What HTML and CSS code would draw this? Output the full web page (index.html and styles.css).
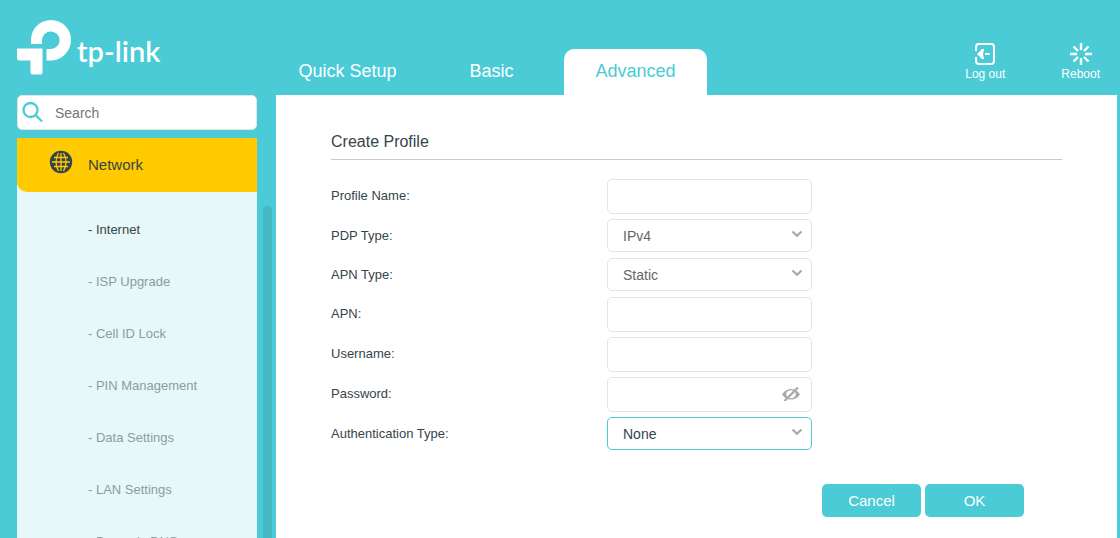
FILE: index.html
```html
<!DOCTYPE html>
<html lang="en">
<head>
  <meta charset="UTF-8" />
  <title>tp-link</title>
  <link rel="stylesheet" href="styles.css">
</head>
<body>

  <header class="top">
    <a class="logo" href="#">
      <svg width="55" height="55" viewBox="0 0 55 55" fill="#fff">
        <path d="M14 24V20A20 20 0 0 1 54 20A20.500 20.500 0 0 1 33.500 40.500H29.500V29H34A8.800 8.800 0 1 0 25 20V24Z" />
        <path d="M0 28.500H25.500V52.500Q25.500 54.500 23.500 54.500H16Q13.500 54.500 13.500 52V40.500H2.500Q0 40.500 0 38Z" />
      </svg>
      <span>tp-link</span>
    </a>

    <nav class="tabs">
      <a href="#">Quick Setup</a>
      <a href="#">Basic</a>
      <a class="active" href="#">Advanced</a>
    </nav>

    <div class="tools">
      <a href="#">
        <svg width="20" height="22" viewBox="0 0 20 22" fill="none" stroke="#fff" stroke-width="2">
          <path d="M1 8V4Q1 1 4 1H16Q19 1 19 4V18Q19 21 16 21H4Q1 21 1 18V14" />
          <path d="M10 11H14.500" />
          <path d="M2 11L7 6H9L8 11L9 16H7Z" fill="#fff" stroke="none" />
        </svg>
        <span>Log out</span>
      </a>
      <a href="#">
        <svg width="22" height="22" viewBox="0 0 22 22" stroke="#fff" stroke-width="2.400">
          <path d="M11 0V7M11 15V22M0 11H7M15 11H22M3.500 3.500L8 8M14 14L18.500 18.500M3.500 18.500L8 14M14 8L18.500 3.500" />
        </svg>
        <span>Reboot</span>
      </a>
    </div>
  </header>

  <div class="layout">
    <aside class="sidebar">
      <div class="search">
        <svg width="21" height="21" viewBox="0 0 21 21" fill="none" stroke="#4acbd6" stroke-width="2.300">
          <circle cx="8.500" cy="8" r="7" />
          <path d="M13.500 13L20 19.500" />
        </svg>
        <input type="text" placeholder="Search" aria-label="Search">
      </div>

      <nav class="menu">
        <div class="menu-head">
          <a href="#">
            <svg width="24" height="24" viewBox="0 0 24 24">
              <circle cx="12" cy="12" r="11.200" fill="#36444b" />
              <g fill="none" stroke="#ffcb00" stroke-width="1.300">
                <path d="M3 12H21M5 7.500H19M5 16.500H19M12 3V21" />
                <path d="M9.500 3Q4.500 12 9.500 21M14.500 3Q19.500 12 14.500 21" />
              </g>
            </svg>
            <span>Network</span>
          </a>
        </div>
        <ul>
          <li><a class="current" href="#">- Internet</a></li>
          <li><a href="#">- ISP Upgrade</a></li>
          <li><a href="#">- Cell ID Lock</a></li>
          <li><a href="#">- PIN Management</a></li>
          <li><a href="#">- Data Settings</a></li>
          <li><a href="#">- LAN Settings</a></li>
          <li><a href="#">- Dynamic DNS</a></li>
        </ul>
      </nav>
    </aside>
    <div class="scroll"></div>

    <main>
      <h1>Create Profile</h1>
      <form>
        <div class="row">
          <label for="profile">Profile Name:</label>
          <div class="field"><input id="profile" type="text"></div>
        </div>
        <div class="row">
          <label for="pdp">PDP Type:</label>
          <div class="field">
            <select id="pdp"><option>IPv4</option></select>
            <svg class="arrow" width="12" height="8" viewBox="0 0 12 8"><path d="M1.500 1.500L6 5.800L10.500 1.500" /></svg>
          </div>
        </div>
        <div class="row">
          <label for="apn-type">APN Type:</label>
          <div class="field">
            <select id="apn-type"><option>Static</option></select>
            <svg class="arrow" width="12" height="8" viewBox="0 0 12 8"><path d="M1.500 1.500L6 5.800L10.500 1.500" /></svg>
          </div>
        </div>
        <div class="row">
          <label for="apn">APN:</label>
          <div class="field"><input id="apn" type="text"></div>
        </div>
        <div class="row">
          <label for="user">Username:</label>
          <div class="field"><input id="user" type="text"></div>
        </div>
        <div class="row">
          <label for="pass">Password:</label>
          <div class="field">
            <input id="pass" type="password">
            <button class="eye" type="button" aria-label="Show password">
              <svg width="18" height="14" viewBox="0 0 18 14">
                <path d="M0 7.500Q3.500 2 9 2T18 7.500Q14.500 12.500 9 12.500T0 7.500Z" fill="#a7a9ac" />
                <ellipse cx="9" cy="7.200" rx="4.800" ry="4" fill="#fff" />
                <path d="M2.500 14L16 0.500" stroke="#a7a9ac" stroke-width="2.200" />
              </svg>
            </button>
          </div>
        </div>
        <div class="row">
          <label for="auth">Authentication Type:</label>
          <div class="field">
            <select id="auth" class="focused"><option>None</option></select>
            <svg class="arrow" width="12" height="8" viewBox="0 0 12 8"><path d="M1.500 1.500L6 5.800L10.500 1.500" /></svg>
          </div>
        </div>

        <div class="buttons">
          <button type="button">Cancel</button>
          <button type="submit">OK</button>
        </div>
      </form>
    </main>
  </div>

</body>
</html>
```

FILE: styles.css
```css
* {
  box-sizing: border-box;
}

body {
  margin: 0;
  height: 100vh;
  overflow: hidden;
  display: flex;
  flex-direction: column;
  background: #4acbd6;
  color: #36444b;
  font-family: "Liberation Sans", Arial, sans-serif;
  font-size: 13px;
}

a {
  color: inherit;
  text-decoration: none;
}

svg {
  display: block;
  flex: none;
}

/* header */
.top {
  display: flex;
  height: 95px;
  flex: none;
  color: #fff;
}

.logo {
  display: flex;
  width: 276px;
  padding: 20px 0 0 17px;
  gap: 5px;
}

.logo span {
  font-family: Lato, sans-serif;
  font-size: 29px;
  font-weight: 600;
  line-height: 62px;
}

.tabs {
  display: flex;
  align-items: flex-end;
  gap: 1px;
}

.tabs a {
  width: 143px;
  height: 46px;
  line-height: 44px;
  border-radius: 10px 10px 0 0;
  font-size: 18px;
  text-align: center;
}

.tabs .active {
  background: #fff;
  color: #4acbd6;
}

.tools {
  display: flex;
  gap: 56px;
  margin-left: auto;
  padding: 43px 20px 0 0;
  font-size: 12px;
}

.tools a {
  display: flex;
  flex-direction: column;
  align-items: center;
  line-height: 18px;
}

/* sidebar */
.layout {
  display: flex;
  flex: 1;
  min-height: 0;
  padding: 0 3px 0 17px;
}

.sidebar {
  display: flex;
  flex-direction: column;
  flex: none;
  width: 240px;
  gap: 8px;
}

.search {
  display: flex;
  height: 35px;
  flex: none;
  padding: 6px 4px 0;
  gap: 12px;
  border: 1px solid #e3e5e5;
  border-radius: 5px;
  background: #fff;
}

.search input {
  flex: 1;
  min-width: 0;
  height: 22px;
  padding: 0;
  border: 0;
  outline: none;
  font: 14px "Liberation Sans", Arial, sans-serif;
}

.search input::placeholder {
  color: #757575;
}

.menu {
  flex: 1;
  min-height: 0;
  overflow: hidden;
  background: #e7f8f8;
}

.menu-head a {
  display: flex;
  height: 54px;
  padding: 12px 0 0 32px;
  gap: 15px;
  border-bottom-left-radius: 10px;
  background: #ffcb00;
  font-size: 15px;
  line-height: 30px;
}

.menu ul {
  margin: 0;
  padding: 12px 0 0 71px;
  list-style: none;
}

.menu li {
  line-height: 52px;
  color: #8d9c9f;
}

.menu .current {
  color: #36444b;
}

.scroll {
  flex: none;
  width: 9px;
  margin: 111px 4px 0 6px;
  border-radius: 5px 5px 0 0;
  background: #46b6c1;
}

/* content */
main {
  flex: 1;
  padding: 33px 55px 0;
  background: #fff;
}

h1 {
  margin: 0 0 19px;
  padding-bottom: 3px;
  border-bottom: 1px solid #c9cacb;
  font-size: 16px;
  font-weight: normal;
  line-height: 28px;
}

.row {
  display: flex;
  min-height: 34px;
  margin-bottom: 5px;
}

.row label {
  width: 276px;
  line-height: 33px;
}

.field {
  position: relative;
  width: 205px;
}

.field input,
.field select {
  display: block;
  width: 100%;
  height: 35px;
  padding: 0 15px;
  border: 1px solid #e3e5e5;
  border-radius: 5px;
  outline: none;
  background: #fff;
  color: #666;
  font: 14px "Liberation Sans", Arial, sans-serif;
}

.field select {
  height: 33px;
  appearance: none;
}

.field .focused {
  border-color: #4acbd6;
  color: #36444b;
}

.arrow {
  position: absolute;
  top: 11px;
  right: 9px;
  fill: none;
  stroke: #a7a9ac;
  stroke-width: 2.2;
  pointer-events: none;
}

.eye {
  position: absolute;
  top: 10px;
  right: 12px;
  padding: 0;
  border: 0;
  background: none;
}

.buttons {
  display: flex;
  justify-content: flex-end;
  gap: 4px;
  margin-top: 33px;
  padding-right: 38px;
}

.buttons button {
  width: 99px;
  height: 33px;
  padding: 0;
  border: 0;
  border-radius: 5px;
  background: #4acbd6;
  color: #fff;
  font: 15px "Liberation Sans", Arial, sans-serif;
}
```
